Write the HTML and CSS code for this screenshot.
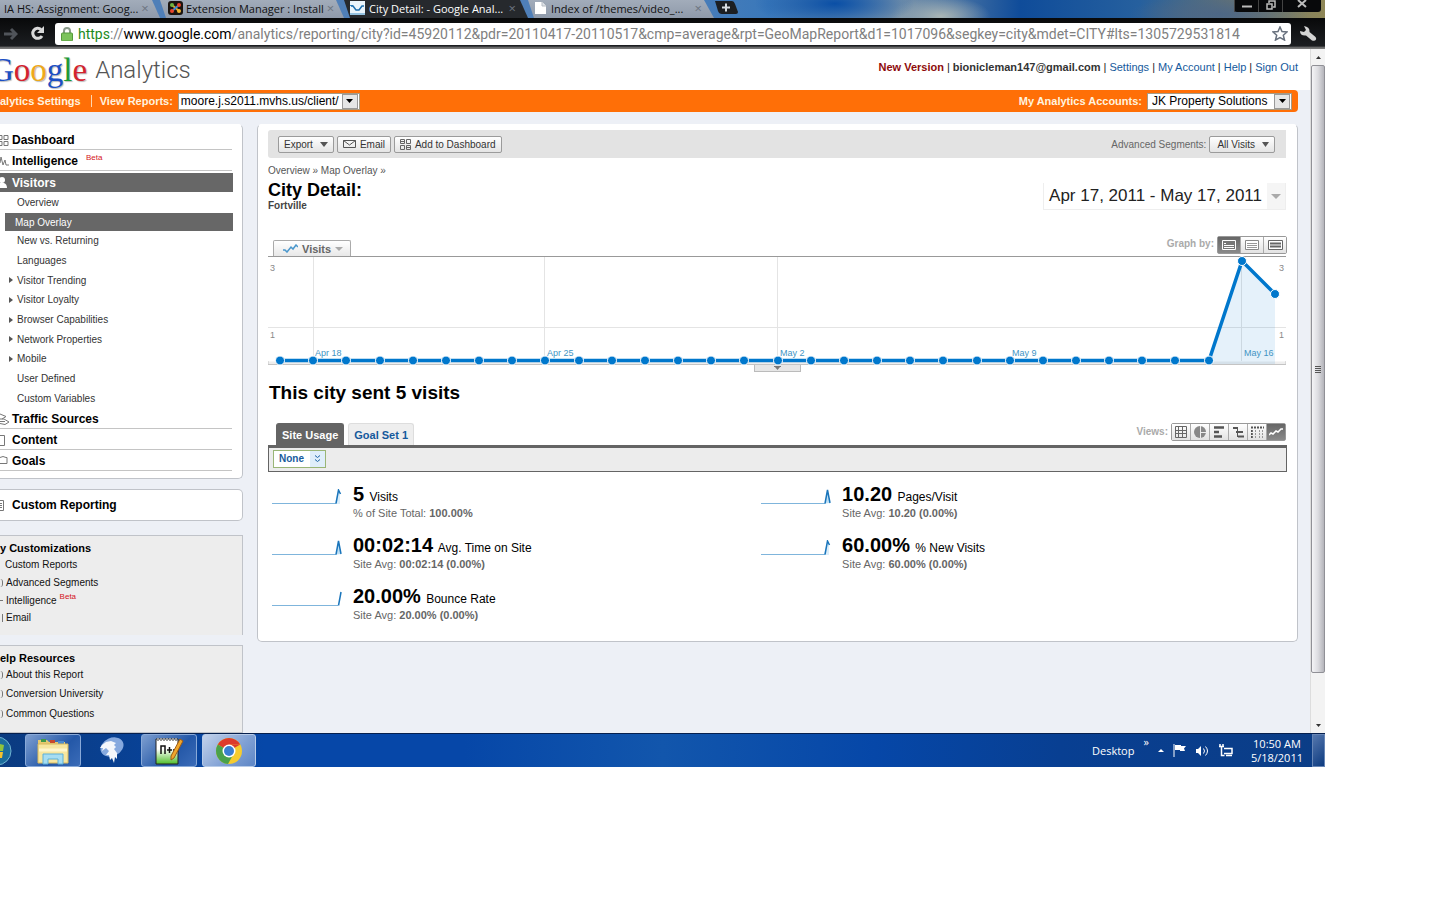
FILE: index.html
```html
<!DOCTYPE html>
<html lang="en">
<head>
<meta charset="utf-8">
<title>City Detail: - Google Analytics</title>
<link rel="stylesheet" href="styles.css">
</head>
<body>
<div class="desktop">
  <div class="tabstrip">
    <button class="tab tab-first"><span class="tab-title">IA HS: Assignment: Goog...</span><span class="tab-close">×</span></button>
    <button class="tab">
      <svg width="15" height="14" viewBox="0 0 15 14"><rect width="15" height="14" rx="3" fill="#1b1410"/><path d="M4 4l7 6" stroke="#e8a32a" stroke-width="2"/><path d="M11 4l-7 6" stroke="#3d8ad0" stroke-width="2"/><circle cx="4" cy="4" r="2" fill="#6db33f"/><circle cx="11" cy="4" r="2" fill="#e8442a"/><circle cx="4" cy="10" r="2" fill="#e8442a"/><circle cx="11" cy="10" r="2" fill="#f2b632"/></svg>
      <span class="tab-title">Extension Manager : Install</span><span class="tab-close">×</span></button>
    <button class="tab tab-active">
      <svg width="15" height="14" viewBox="0 0 15 14"><rect width="15" height="14" fill="#e9f4fb"/><path d="M0 13h15M0 4.500h3" stroke="#3e8ec4"/><path d="M1 5l2 0 3 4h3l3-4h2" fill="none" stroke="#1d6fae" stroke-width="1.500"/></svg>
      <span class="tab-title">City Detail: - Google Anal...</span><span class="tab-close">×</span></button>
    <button class="tab tab-last">
      <svg width="11" height="12" viewBox="0 0 11 12"><path d="M0 0h7l4 4v8H0z" fill="#fff"/><path d="M7 0v4h4" fill="#dfe3e8" stroke="#b6bcc4"/></svg>
      <span class="tab-title">Index of /themes/video_...</span><span class="tab-close">×</span></button>
    <button class="tab-new" aria-label="New tab"><svg width="24" height="13" viewBox="0 0 24 13"><path d="M1 0h17q2 0 3 3l3 8q0 2-2 2H8q-3 0-4-3z" fill="#1c1f23"/><path d="M12 2.500v8M8 6.500h8" stroke="#d8dde2" stroke-width="2"/></svg></button>
    <div class="window-buttons">
      <button aria-label="Minimize"><svg width="12" height="10"><path d="M1 6.500h10" stroke="#bbb" stroke-width="2"/></svg></button>
      <button aria-label="Restore"><svg width="12" height="10"><path d="M4 3V1h6v6H8M2 4h5v5H2z" fill="none" stroke="#bbb" stroke-width="1.500"/></svg></button>
      <button class="window-close" aria-label="Close"><svg width="12" height="10"><path d="M2 0l8 7M10 0L2 7" stroke="#bbb" stroke-width="2"/></svg></button>
    </div>
  </div>

  <div class="omnibar">
    <button class="nav-button" aria-label="Forward"><svg width="14" height="14"><path d="M0 7h10M7 2l5 5-5 5" fill="none" stroke="#50545a" stroke-width="3"/></svg></button>
    <button class="nav-button reload" aria-label="Reload"><svg width="15" height="15"><path d="M11 3.500A5 5 0 1 0 12 10" fill="none" stroke="#d9d9d9" stroke-width="3"/><path d="M14 0v7H7z" fill="#d9d9d9"/></svg></button>
    <div class="address">
      <svg width="12" height="14" viewBox="0 0 12 14"><path d="M3 7V4a3 3 0 0 1 6 0v3" fill="none" stroke="#8a9a8a" stroke-width="2"/><rect x=".5" y="6" width="11" height="8" rx="1" fill="#7cc35c" stroke="#559a3c"/></svg>
      <span class="url"><span class="scheme">https</span>://<span class="host">www.google.com</span>/analytics/reporting/city?id=45920112&amp;pdr=20110417-20110517&amp;cmp=average&amp;rpt=GeoMapReport&amp;d1=1017096&amp;segkey=city&amp;mdet=CITY#lts=1305729531814</span>
      <svg width="16" height="15" viewBox="0 0 16 15"><path d="M8 1l2 4.500 5 .5-3.700 3.300L12.500 14 8 11.500 3.500 14l1.200-4.700L1 6l5-.5z" fill="#fff" stroke="#68717e" stroke-width="1.500"/></svg>
    </div>
    <button class="wrench" aria-label="Customize"><svg width="17" height="15" viewBox="0 0 17 15"><path d="M4 0l2 4-2 2-4-1q0 5 6 4.500l6 5q3 1 4-1 .5-2-1-3L9.500 6Q10 1 4 0z" fill="#d4d4d4"/></svg></button>
  </div>

  <div class="viewport">
    <div class="page">
      <header class="masthead">
        <div class="logo"><span class="google"><span class="g-blue">G</span><span class="g-red">o</span><span class="g-yellow">o</span><span class="g-blue">g</span><span class="g-green">l</span><span class="g-red">e</span></span><span class="product">Analytics</span></div>
        <nav class="account-links"><a class="new-version" href="#">New Version</a><i>|</i><b>bionicleman147@gmail.com</b><i>|</i><a href="#">Settings</a><i>|</i><a href="#">My Account</a><i>|</i><a href="#">Help</a><i>|</i><a href="#">Sign Out</a></nav>
      </header>
      <div class="orange-bar">
        <span class="settings-link">alytics Settings</span>
        <label for="profile">View Reports:</label>
        <span class="picker"><select id="profile"><option>moore.j.s2011.mvhs.us/client/</option></select><span class="picker-arrow"><svg width="7" height="4"><path d="M0 0h7L3.500 4z"/></svg></span></span>
        <label class="accounts-label" for="account">My Analytics Accounts:</label>
        <span class="picker picker-account"><select id="account"><option>JK Property Solutions</option></select><span class="picker-arrow"><svg width="7" height="4"><path d="M0 0h7L3.500 4z"/></svg></span></span>
      </div>

      <div class="columns">
        <aside class="sidebar">
          <nav class="box nav-box">
            <a class="head" href="#"><svg class="head-icon" width="9" height="12"><path d="M-3 1.500h5v4h-5M4 1.500h4v4H4zM-3 7.500h5v4h-5M4 7.500h4v4H4z" fill="none" stroke="#777"/></svg>Dashboard</a>
            <a class="head" href="#"><svg class="head-icon" width="9" height="12"><path d="M0 8l1-6 2 8 2-5 1 5h3" fill="none" stroke="#777"/></svg>Intelligence <sup>Beta</sup></a>
            <a class="head head-current" href="#"><svg class="head-icon" width="9" height="12"><circle cx="2" cy="3" r="3" fill="#fff"/><path d="M0 6h4q3 1 3 5H0z" fill="#fff"/></svg>Visitors</a>
            <a class="sub sub-first" href="#">Overview</a>
            <a class="sub sub-current" href="#">Map Overlay</a>
            <div class="subs">
              <a class="sub" href="#">New vs. Returning</a>
              <a class="sub" href="#">Languages</a>
              <a class="sub more" href="#">Visitor Trending</a>
              <a class="sub more" href="#">Visitor Loyalty</a>
              <a class="sub more" href="#">Browser Capabilities</a>
              <a class="sub more" href="#">Network Properties</a>
              <a class="sub more" href="#">Mobile</a>
              <a class="sub" href="#">User Defined</a>
              <a class="sub" href="#">Custom Variables</a>
            </div>
            <a class="head" href="#"><svg class="head-icon" width="10" height="12"><path d="M0 1l6 2.500L2 6M0 6h4l5 3-4 2.500-5-1M0 8.500h5" fill="none" stroke="#777"/></svg>Traffic Sources</a>
            <a class="head" href="#"><svg class="head-icon" width="9" height="12"><path d="M0 1.500h4.500v10H0" fill="none" stroke="#777"/></svg>Content</a>
            <a class="head" href="#"><svg class="head-icon" width="9" height="12"><path d="M0 2.500q3-2 6 0h1v6H0" fill="none" stroke="#777"/></svg>Goals</a>
          </nav>
          <div class="box reporting-box"><a href="#"><svg class="head-icon" width="9" height="12"><path d="M0 1.500h3.500v10H0M0 4.500h2M0 6.500h2M0 8.500h2" fill="none" stroke="#777"/></svg>Custom Reporting</a></div>
          <section class="box gray-box custom-box">
            <h3>y Customizations</h3>
            <a href="#">Custom Reports</a>
            <a href="#" class="round">Advanced Segments</a>
            <a href="#" class="dash">Intelligence <sup>Beta</sup></a>
            <a href="#" class="bar">Email</a>
          </section>
          <section class="box gray-box help-box">
            <h3>elp Resources</h3>
            <a href="#" class="round">About this Report</a>
            <a href="#" class="round">Conversion University</a>
            <a href="#" class="round">Common Questions</a>
          </section>
        </aside>

        <main class="report">
          <div class="actions">
            <button class="btn">Export <svg class="caret" width="8" height="5"><path d="M0 0h8L4 5z" fill="#555"/></svg></button>
            <button class="btn"><svg width="13" height="8"><path d="M.5.5h12v7H.5zM.5.500l6 4.500 6-4.500" fill="none" stroke="#555"/></svg> Email</button>
            <button class="btn"><svg width="11" height="11"><path d="M.5.5h4v4h-4zM6.500.5h4v4h-4zM.5 6.500h4v4h-4zM6.500 6.500h4v4h-4zM.5 2.500h4M6.500 8.500h4" fill="none" stroke="#666"/></svg> Add to Dashboard</button>
            <span class="segments-label">Advanced Segments:</span>
            <button class="btn btn-segments">All Visits <svg class="caret" width="7" height="5"><path d="M0 0h7L3.500 5z" fill="#555"/></svg></button>
          </div>
          <div class="crumbs"><a href="#">Overview</a> » <a href="#">Map Overlay</a> »</div>
          <div class="title-row">
            <div><h1>City Detail:</h1><p class="city">Fortville</p></div>
            <button class="dates"><span>Apr 17, 2011 - May 17, 2011</span><span class="dates-arrow"><svg width="10" height="5"><path d="M0 0h10L5 5z" fill="#aaa"/></svg></span></button>
          </div>
          <div class="graph-head">
            <button class="metric-tab"><svg width="15" height="9"><path d="M0 6h2l2 2 4-5 2 2 3-4 2 2" fill="none" stroke="#4a97cc" stroke-width="1.500"/></svg>Visits<svg width="8" height="4"><path d="M0 0h8L4 4z" fill="#aaa"/></svg></button>
            <span class="graph-by">Graph by:</span>
            <div class="group">
              <button class="on" aria-label="Day"><svg width="14" height="10"><path d="M.5.5h13v9H.5z" fill="#777" stroke="#fff"/><path d="M2 3.500h2M2 5.500h10M2 7.500h10" stroke="#fff"/></svg></button>
              <button aria-label="Week"><svg width="14" height="10"><path d="M.5.5h13v9H.5z" fill="#fff" stroke="#888"/><path d="M2 3.500h10M2 5.500h10M2 7.500h10" stroke="#999"/></svg></button>
              <button aria-label="Month"><svg width="15" height="10"><path d="M.5.5h14v9H.5z" fill="#fff" stroke="#666"/><path d="M2 3.500h11M2 6.500h11" stroke="#666" stroke-width="2"/></svg></button>
            </div>
          </div>
          <svg class="chart" viewBox="0 0 1018 109" role="img" aria-label="Visits per day">
            <defs><marker id="dot" markerUnits="userSpaceOnUse" markerWidth="12" markerHeight="12" refX="6" refY="6"><circle cx="6" cy="6" r="4.500" fill="#0077cc" stroke="#fff"/></marker></defs>
            <path d="M0 107h1018" stroke="#eee" stroke-width="3"/>
            <path d="M0 71.500h1018M45.500 1v104M276.500 1v104M509.500 1v104M973.500 1v104" stroke="#e4e4e4"/>
            <path d="M0 .5h1018" stroke="#999"/>
            <path d="M0 105v3.500h1018V105" fill="none" stroke="#c4c4c4"/>
            <path d="M941 105L974 5l33 33v70H941z" fill="#0077cc" fill-opacity=".1"/>
            <polyline points="12,104.500 45,104.500 78,104.500 112,104.500 145,104.500 178,104.500 211,104.500 244,104.500 277,104.500 311,104.500 344,104.500 377,104.500 410,104.500 443,104.500 476,104.500 510,104.500 543,104.500 576,104.500 609,104.500 642,104.500 675,104.500 709,104.500 742,104.500 775,104.500 808,104.500 841,104.500 874,104.500 907,104.500 941,104.500 974,5 1007,38" fill="none" stroke="#0077cc" stroke-width="3.500" marker-start="url(#dot)" marker-mid="url(#dot)" marker-end="url(#dot)"/>
            <g class="axis"><text x="2" y="15">3</text><text x="2" y="82">1</text><text x="1011" y="15">3</text><text x="1011" y="82">1</text></g>
            <g class="days"><text x="47" y="100">Apr 18</text><text x="279" y="100">Apr 25</text><text x="512" y="100">May 2</text><text x="744" y="100">May 9</text><text x="976" y="100">May 16</text></g>
          </svg>
          <button class="chart-handle" aria-label="Collapse graph"><svg width="7" height="4"><path d="M0 .5h7" stroke="#777"/><path d="M1 1h5L3.500 4z" fill="#777"/></svg></button>
          <h2>This city sent 5 visits</h2>
          <div class="tabs">
            <button class="goal-tab goal-on">Site Usage</button>
            <button class="goal-tab">Goal Set 1</button>
            <span class="views-label">Views:</span>
            <div class="group views">
              <button aria-label="Table"><svg width="12" height="12"><path d="M.5.5h11v11H.5zM.5 4.500h11M.5 7.500h11M3.500 0v12M7.500 0v12" fill="none" stroke="#666"/></svg></button>
              <button aria-label="Percentage"><svg width="12" height="12"><circle cx="6" cy="6" r="6" fill="#888"/><path d="M6.500 0v12M6 6.500h6" stroke="#eee"/></svg></button>
              <button aria-label="Performance"><svg width="12" height="12"><path d="M1 1.500h10M1 6h5M1 10.500h8" stroke="#555" stroke-width="2.500"/></svg></button>
              <button aria-label="Comparison"><svg width="12" height="12"><path d="M1 2h5M4 6h7M6 10.500h6" stroke="#555" stroke-width="2"/><path d="M5.500 1v10" stroke="#555"/></svg></button>
              <button aria-label="Pivot"><svg width="13" height="12"><path d="M0 1.500h13M.8 4v8" stroke="#555" stroke-width="2" stroke-dasharray="2 1"/><path d="M4.500 4v8M8.500 4v8M11.500 4v8" stroke="#999" stroke-dasharray="2 1"/></svg></button>
              <button class="on" aria-label="Sparklines"><svg width="14" height="10"><path d="M0 8l2-2 2 1 3-3 2 1 3-3h2" fill="none" stroke="#fff" stroke-width="1.500"/></svg></button>
            </div>
          </div>
          <div class="filter"><button class="none-picker"><span>None</span><span class="chevrons"><svg width="7" height="8"><path d="M1 .5l2.500 2L6 .5M1 4.500l2.500 2 2.500-2" fill="none" stroke="#1a62a5"/></svg></span></button></div>
          <div class="metrics">
            <div class="metric"><svg class="spark" viewBox="0 0 71 16"><path d="M63 15l3-13 2 2v11z" fill="#dceefa"/><path d="M0 14.500h64" stroke="#7fb5dc"/><path d="M64 14.500L66.500 1l2 4" fill="none" stroke="#1a75bb" stroke-width="1.500"/></svg><div><p><strong>5</strong> Visits</p><small>% of Site Total: <b>100.00%</b></small></div></div>
            <div class="metric"><svg class="spark" viewBox="0 0 71 16"><path d="M0 14.500h64" stroke="#7fb5dc"/><path d="M64 14.500L66.500 1 69 14" fill="#bfe0f4" stroke="#1a75bb" stroke-width="1.500"/></svg><div><p><strong>10.20</strong> Pages/Visit</p><small>Site Avg: <b>10.20 (0.00%)</b></small></div></div>
            <div class="metric"><svg class="spark" viewBox="0 0 71 16"><path d="M0 14.500h64" stroke="#7fb5dc"/><path d="M64 14.500L66.500 1 69 14" fill="#bfe0f4" stroke="#1a75bb" stroke-width="1.500"/></svg><div><p><strong>00:02:14</strong> Avg. Time on Site</p><small>Site Avg: <b>00:02:14 (0.00%)</b></small></div></div>
            <div class="metric"><svg class="spark" viewBox="0 0 71 16"><path d="M63 15l3-13 2 2v11z" fill="#dceefa"/><path d="M0 14.500h64" stroke="#7fb5dc"/><path d="M64 14.500L66.500 1l2 4" fill="none" stroke="#1a75bb" stroke-width="1.500"/></svg><div><p><strong>60.00%</strong> % New Visits</p><small>Site Avg: <b>60.00% (0.00%)</b></small></div></div>
            <div class="metric"><svg class="spark" viewBox="0 0 71 16"><path d="M0 14.500h66" stroke="#7fb5dc"/><path d="M66.500 14.500L69 1" fill="none" stroke="#1a75bb" stroke-width="1.500"/></svg><div><p><strong>20.00%</strong> Bounce Rate</p><small>Site Avg: <b>20.00% (0.00%)</b></small></div></div>
          </div>
        </main>
      </div>
    </div>
    <div class="scrollbar">
      <span class="scroll-arrow"><svg width="5" height="3"><path d="M0 3h5L2.500 0z" fill="#333"/></svg></span>
      <span class="thumb"><svg width="6" height="7"><path d="M0 .5h6M0 2.500h6M0 4.500h6M0 6.500h6" stroke="#555"/></svg></span>
      <span class="scroll-arrow scroll-down"><svg width="5" height="3"><path d="M0 0h5L2.500 3z" fill="#333"/></svg></span>
    </div>
  </div>

  <footer class="taskbar">
    <button class="start" aria-label="Start"><svg width="12" height="32" viewBox="0 0 12 32"><circle cx="-3" cy="16" r="14" fill="#1b6c9c" stroke="#6fb3d2"/><path d="M0 9l4 1-1 6H0z" fill="#8fc43c"/><path d="M0 17h3l-1 6H0z" fill="#f5c22e"/></svg></button>
    <button class="task task-open" aria-label="Explorer"><svg width="34" height="28" viewBox="0 0 34 28"><path d="M2 3h9l2 2h16v5H2z" fill="#e6c970"/><path d="M5 2h5v3H5z" fill="#3f9a4a"/><path d="M14 3h5v3h-5z" fill="#c8482d"/><path d="M22 4h6v3h-6z" fill="#4b8bd0"/><path d="M2 7h30v19H2z" fill="#f6e6a0" stroke="#d8b95c"/><path d="M3 13h28" stroke="#fff6cc" stroke-width="3"/><path d="M7 27V17h20v10h-5v-5H12v5z" fill="#a6ddf2" stroke="#5cb0d8"/></svg></button>
    <button class="task" aria-label="Messenger"><svg width="28" height="28" viewBox="0 0 28 28"><ellipse cx="15" cy="10" rx="12" ry="9" fill="#86a9de" transform="rotate(-25 15 10)"/><path d="M5 8l4-3 5-1 5 2-2 2 2 2-2 2 3 4v6l-2-2-1 6-2-5-2 2-1-5-3 0 3-4-3-3-4 3 1-3-3 0z" fill="#f4f7fb"/></svg></button>
    <button class="task task-open" aria-label="Notepad++"><svg width="30" height="28" viewBox="0 0 30 28"><defs><linearGradient id="note" x1="0" y1="0" x2="0" y2="1"><stop offset=".4" stop-color="#fff"/><stop offset="1" stop-color="#4fbe2a"/></linearGradient></defs><path d="M2 2h22v25H2z" fill="url(#note)" stroke="#222"/><path d="M3 2.500h20" stroke="#999" stroke-width="3" stroke-dasharray="2 1"/><path d="M7 17v-8h4v8M13 13h5M15.500 10v6M19 13h3" fill="none" stroke="#111" stroke-width="1.500"/><path d="M26 2l3 2-9 17-3 2v-4z" fill="#f0a62b" stroke="#9c5a16"/></svg></button>
    <button class="task task-front" aria-label="Chrome"><svg width="28" height="28" viewBox="0 0 28 28"><circle cx="14" cy="14" r="13" fill="#f6cc2f"/><path d="M14 14L2.800 7.400A13 13 0 0 1 25.200 7.400H14z" fill="#dd3b2c"/><path d="M14 14L2.800 7.400A13 13 0 0 0 13 27l5.500-10z" fill="#4aa14a"/><path d="M25.200 7.400H14V14z" fill="#dd3b2c"/><circle cx="14" cy="14" r="6.500" fill="#fff"/><circle cx="14" cy="14" r="5" fill="#3b7fd0"/></svg></button>
    <div class="tray">
      <span class="desk">Desktop</span><span class="raised">»</span>
      <svg width="6" height="3"><path d="M0 3h6L3 0z" fill="#fff"/></svg>
      <svg width="14" height="13"><path d="M1 0v13" stroke="#fff"/><path d="M2 1h6v1h5l-2 2.500L12 7H7V6H2z" fill="#fff"/></svg>
      <svg width="14" height="12"><path d="M0 4h2l3-3v10L2 8H0z" fill="#fff"/><path d="M7.500 3.500q2 2.500 0 5M9.500 1.500q4 4.500 0 9" fill="none" stroke="#fff"/></svg>
      <svg width="14" height="13"><path d="M5 4.500h8v5H5M7 11.500h6M0 2.500h5M1 0v3M4 0v3M2.500 3v8.500h3" fill="none" stroke="#fff" stroke-width="1.500"/></svg>
      <div class="clock"><div>10:50 AM</div><div>5/18/2011</div></div>
      <button class="show-desktop" aria-label="Show desktop"></button>
    </div>
  </footer>
</div>
</body>
</html>
```
FILE: styles.css
```css
* { box-sizing: border-box; }
body { margin: 0; padding-right: 115px; background: #fff; font-family: "Liberation Sans", Arial, sans-serif; font-size: 10px; color: #000; }
button { font: inherit; color: inherit; margin: 0; padding: 0; border: 0; background: none; }
a { color: inherit; text-decoration: none; }
p, h1, h2, h3 { margin: 0; }
svg { flex: none; display: block; }
.desktop { display: flex; flex-direction: column; overflow: hidden; }

/* Browser frame */
.tabstrip { display: flex; height: 18px; overflow: hidden; font-family: "Open Sans", sans-serif; font-size: 11px; background: radial-gradient(ellipse 80px 24px at 63% 20%, #0a4fa6, transparent), radial-gradient(ellipse 50px 20px at 71% 90%, #a9b5b5, transparent), radial-gradient(ellipse 90px 20px at 92% 80%, #4d6786, transparent), linear-gradient(90deg, #4f7fb8 50%, #3a78ba 58%, #7792aa 68%, #0f4c9a 77%, #26609e 86%, #6e756d 94%, #8f8757); }
.tab { flex: none; display: flex; align-items: center; gap: 3px; width: 184px; height: 18px; padding: 0 8px 2px; background: linear-gradient(#a2acba, #8f9aaa); clip-path: polygon(0 0, 176px 0, 100% 100%, 6px 100%); color: #111; white-space: nowrap; }
.tab-first { width: 160px; padding-left: 4px; clip-path: polygon(0 0, 152px 0, 100% 100%, 0 100%); }
.tab-active { background: #26292d; color: #fff; padding-left: 6px; gap: 4px; }
.tab-last { padding-left: 7px; width: 186px; gap: 5px; }
.tab-title { flex: 1; text-align: left; }
.tab-close { color: #6c7480; font-size: 13px; padding-right: 4px; }
.tab-new { padding-bottom: 3px; }
.window-buttons { display: flex; margin-left: auto; margin-right: 4px; height: 12px; background: #08090b; border-radius: 0 0 3px 3px; }
.window-buttons button { width: 24px; display: flex; justify-content: center; border-left: 1px solid #444; }
.window-buttons .window-close { width: 39px; }
.omnibar { display: flex; align-items: center; height: 31px; padding: 0 8px 0 4px; background: linear-gradient(#08090a, #1c1e21 90%, #777 96%); }
.nav-button { margin-right: 12px; }
.reload { margin-right: 10px; }
.address { flex: 1; min-width: 0; display: flex; align-items: center; gap: 5px; height: 22px; padding: 0 3px 0 6px; background: #fff; border-radius: 3px; font-family: Roboto, sans-serif; font-size: 14px; color: #808080; }
.url { flex: 1; overflow: hidden; white-space: nowrap; }
.scheme { color: #1c8a1c; }
.host { color: #000; }
.wrench { margin-left: 9px; }

/* Analytics header */
.viewport { display: flex; background: #edf0f6; }
.page { flex: 1; min-width: 0; padding-right: 12px; background: linear-gradient(#fff 41px, transparent 41px); }
.masthead { display: flex; justify-content: space-between; height: 41px; }
.logo { display: flex; align-items: center; gap: 8px; height: 41px; margin-left: -10px; }
.google { font-family: "Liberation Serif", serif; font-size: 33px; line-height: 38px; text-shadow: 1px 1px 1px #bbb; }
.g-blue { color: #1b4fc4; }
.g-red { color: #d3232e; }
.g-yellow { color: #efa91b; }
.g-green { color: #1c9a35; }
.product { font-family: Roboto, sans-serif; font-weight: 300; font-size: 24px; color: #555; }
.account-links { display: flex; gap: 3px; padding-top: 12px; font-size: 11px; line-height: 13px; color: #333; white-space: nowrap; }
.account-links a { color: #15599c; }
.account-links i { font-style: normal; color: #222; }
.account-links .new-version { color: #8e0b0b; font-weight: bold; }
.orange-bar { display: flex; align-items: center; height: 22px; padding-right: 6px; background: #ff6f07; border-radius: 0 4px 4px 0; color: #fff3df; font-size: 11px; font-weight: bold; }
.settings-link { padding-right: 10px; margin-right: 8px; border-right: 1px solid #ffd6ae; line-height: 12px; }
.picker { display: flex; margin-left: 5px; height: 17px; background: #fff; border: 1px solid #a59a86; }
.picker select { appearance: none; border: 0; padding: 0 2px; background: #fff; color: #000; font: 12px "Liberation Sans", Arial, sans-serif; }
.picker-account select { padding: 0 5px 0 4px; }
.picker-arrow { width: 16px; margin: 0 1px; display: grid; place-items: center; background: #e6e6e6; border: 1px solid #999; }
.accounts-label { margin-left: auto; }

/* Sidebar */
.columns { display: flex; align-items: flex-start; gap: 14px; padding-top: 12px; }
.sidebar { width: 243px; flex: none; display: flex; flex-direction: column; }
.box { background: #fff; border: 1px solid #c0c3c9; border-left: 0; border-radius: 0 5px 5px 0; }
.nav-box { border-top-color: #fff; padding: 4px 9px 7px 0; color: #333; }
.head { display: flex; align-items: center; gap: 3px; height: 21px; padding-top: 2px; border-bottom: 1px solid #c4c4c4; margin-right: 1px; font-size: 12px; font-weight: bold; color: #000; }
.head-icon { width: 9px; overflow: hidden; }
sup { align-self: flex-start; font-size: 8px; line-height: 10px; font-weight: normal; color: #d4141c; vertical-align: top; }
.head sup { padding: 1px 0 0 5px; }
.head-current { height: 19px; margin: 2px 0 0; padding: 0; border: 0; background: #676767; color: #fff; }
.sub { display: flex; align-items: center; padding-left: 17px; }
.sub-first { height: 21px; }
.sub-current { height: 18px; margin-left: 5px; padding-left: 10px; background: #676767; color: #fff; }
.subs { display: flex; flex-direction: column; height: 177px; }
.subs .sub { flex: 1; }
.subs .more { padding-left: 9px; gap: 4px; }
.more::before { content: ""; border: 3px solid transparent; border-left: 4px solid #555; border-right: 0; }
.reporting-box { margin-top: 10px; padding: 8px 0; font-size: 12px; font-weight: bold; line-height: 14px; }
.reporting-box a { display: flex; align-items: center; gap: 3px; }
.gray-box { display: flex; flex-direction: column; background: #ededed; border-radius: 0; padding: 5px 0 8px; color: #111; }
.gray-box h3 { font-size: 11px; line-height: 15px; color: #000; }
.gray-box a { display: flex; gap: 3px; align-items: center; padding-left: 5px; line-height: 17px; }
.round::before, .dash::before, .bar::before { content: ""; width: 2px; margin-left: -5px; height: 8px; border-right: 1px solid #777; }
.round::before { border-radius: 0 5px 5px 0; }
.dash::before { height: 1px; background: #777; }
.custom-box { margin-top: 14px; border-bottom: 0; height: 100px; }
.custom-box .round { line-height: 19px; }
.help-box { margin-top: 10px; height: 88px; }
.help-box a { line-height: 20px; }
.help-box h3 + a { line-height: 18px; }

/* Report */
.report { flex: 1; min-width: 0; padding: 5px 10px 4px; background: #fff; border: 1px solid #c0c3c9; border-top-color: #fff; border-radius: 5px; }
.actions { display: flex; align-items: center; gap: 3px; height: 28px; margin-right: 1px; padding: 0 11px 0 10px; background: #e3e3e3; border-radius: 3px 0 0 3px; }
.btn { display: flex; align-items: center; gap: 4px; height: 17px; padding: 0 5px; border: 1px solid #9b9b9b; border-radius: 2px; background: linear-gradient(#fff, #e4e4e4); color: #333; white-space: nowrap; }
.btn .caret { margin-left: 3px; }
.btn-segments { padding: 0 5px 0 7px; }
.segments-label { margin-left: auto; color: #666; }
.crumbs { padding-top: 7px; line-height: 12px; color: #555; }
.title-row { display: flex; justify-content: space-between; align-items: flex-start; margin-right: 1px; padding-top: 3px; }
h1 { font-size: 18px; line-height: 20px; }
.city { font-size: 10px; line-height: 12px; font-weight: bold; color: #444; }
.dates { display: flex; height: 27px; margin-top: 3px; border: 1px solid #eee; border-top: 0; font-size: 17px; line-height: 25px; color: #222; }
.dates span:first-child { padding: 0 5px; }
.dates-arrow { width: 18px; display: grid; place-items: center; background: #f5f5f5; }
.graph-head { display: flex; align-items: flex-end; margin-top: 24px; }
.metric-tab { display: flex; align-items: center; gap: 4px; height: 16px; margin: 0 0 0 5px; padding: 0 7px 0 9px; border: 1px solid #aaa; border-bottom: 0; border-radius: 2px 2px 0 0; background: linear-gradient(#fff, #e8e8e8); font-size: 11px; font-weight: bold; color: #666; }
.graph-by, .views-label { margin-left: auto; padding-right: 3px; font-weight: bold; color: #aaa; line-height: 12px; }
.graph-by { padding-bottom: 6px; }
.group { display: flex; border: 1px solid #999; border-radius: 2px; }
.graph-head .group { margin-bottom: 2px; }
.group button { display: grid; place-items: center; width: 22px; height: 16px; background: linear-gradient(#fff, #e2e2e2); }
.group button + button { border-left: 1px solid #aaa; width: 23px; }
.group .on { background: linear-gradient(#666, #8a8a8a); }
.chart { width: calc(100% - 1px); height: auto; }
.axis { font-size: 9px; fill: #888; }
.days { font-size: 9px; fill: #3f94c4; }
.chart-handle { display: grid; place-items: center; width: 47px; height: 7px; margin: 0 auto; background: #e6e6e6; border: 1px solid #bbb; border-top: 0; }
h2 { padding: 9px 1px 0; font-size: 19px; line-height: 24px; }
.tabs { display: flex; align-items: flex-end; gap: 4px; margin-top: 18px; padding: 0 1px 0 8px; }
.goal-tab { height: 22px; padding: 0 5px; border: 1px solid #ddd; border-bottom: 0; border-radius: 3px 3px 0 0; background: #eee; color: #15599c; font-size: 11px; font-weight: bold; }
.goal-on { background: #646464; border-color: #646464; color: #fff; }
.views-label { padding-bottom: 7px; padding-right: 0; }
.views { margin: 0 0 4px -1px; }
.tabs .views button { width: 18px; }
.tabs .views button + button { width: 19px; }
.filter { padding: 2px 4px 3px; background: #ececec; border: 1px solid #646464; border-top-width: 3px; }
.none-picker { display: flex; height: 18px; background: #fff; border: 1px solid #9ab576; color: #1a5c9c; font-size: 10px; line-height: 16px; font-weight: bold; }
.none-picker span:first-child { padding: 0 6px 0 5px; }
.chevrons { display: grid; place-items: center; width: 15px; background: #dfeefa; }
.metrics { display: grid; grid-template-columns: 48% 1fr; grid-auto-rows: 51px; padding-top: 12px; }
.metric { display: flex; align-items: flex-start; gap: 10px; padding-left: 4px; white-space: nowrap; }
.spark { width: 71px; height: 16px; margin-top: 5px; }
.metric p { font-size: 12px; line-height: 20px; }
.metric strong { font-size: 20px; padding-right: 2px; }
.metric small { display: block; font-size: 11px; line-height: 12px; color: #666; }

.scrollbar { width: 15px; flex: none; display: flex; flex-direction: column; background: #f3f3f3; border-left: 1px solid #ddd; }
.scroll-arrow { height: 16px; display: grid; place-items: center; }
.scroll-down { margin-top: auto; }
.thumb { height: 608px; display: grid; place-items: center; border: 1px solid #909096; border-radius: 2px; background: linear-gradient(90deg, #f4f4f6, #dcdce0 50%, #b4b4ba); }

/* Taskbar */
.taskbar { display: flex; align-items: stretch; height: 34px; border-top: 1px solid #06204e; background: linear-gradient(90deg, #0b3b80, #0647a8 20%, #0647a8 35%, #1256ac 50%, #0647a8 66%, #083f92 80%, #0b3d86); font-family: "Open Sans", sans-serif; font-size: 11px; color: #fff; }
.start { width: 24px; }
.task { display: grid; place-items: center; width: 56px; margin: 0 1px; border-radius: 3px; }
.task-open { border: 1px solid #88a9d8; background: linear-gradient(135deg, #7e9fd0, #2458a8 60%, #3b6cb8); }
.task-front { width: 54px; margin-left: 4px; border: 1px solid #b7cbe8; background: linear-gradient(135deg, #c3d2ea, #7fa0d4 60%, #5d86c6); }
.tray { margin-left: auto; display: flex; align-items: center; gap: 9px; }
.raised { align-self: flex-start; line-height: 16px; }
.clock { text-align: center; line-height: 14px; margin-left: 9px; }
.show-desktop { width: 13px; height: 33px; border: 1px solid #6685b5; background: linear-gradient(135deg, #5577ad, #0d3b80); }
```
